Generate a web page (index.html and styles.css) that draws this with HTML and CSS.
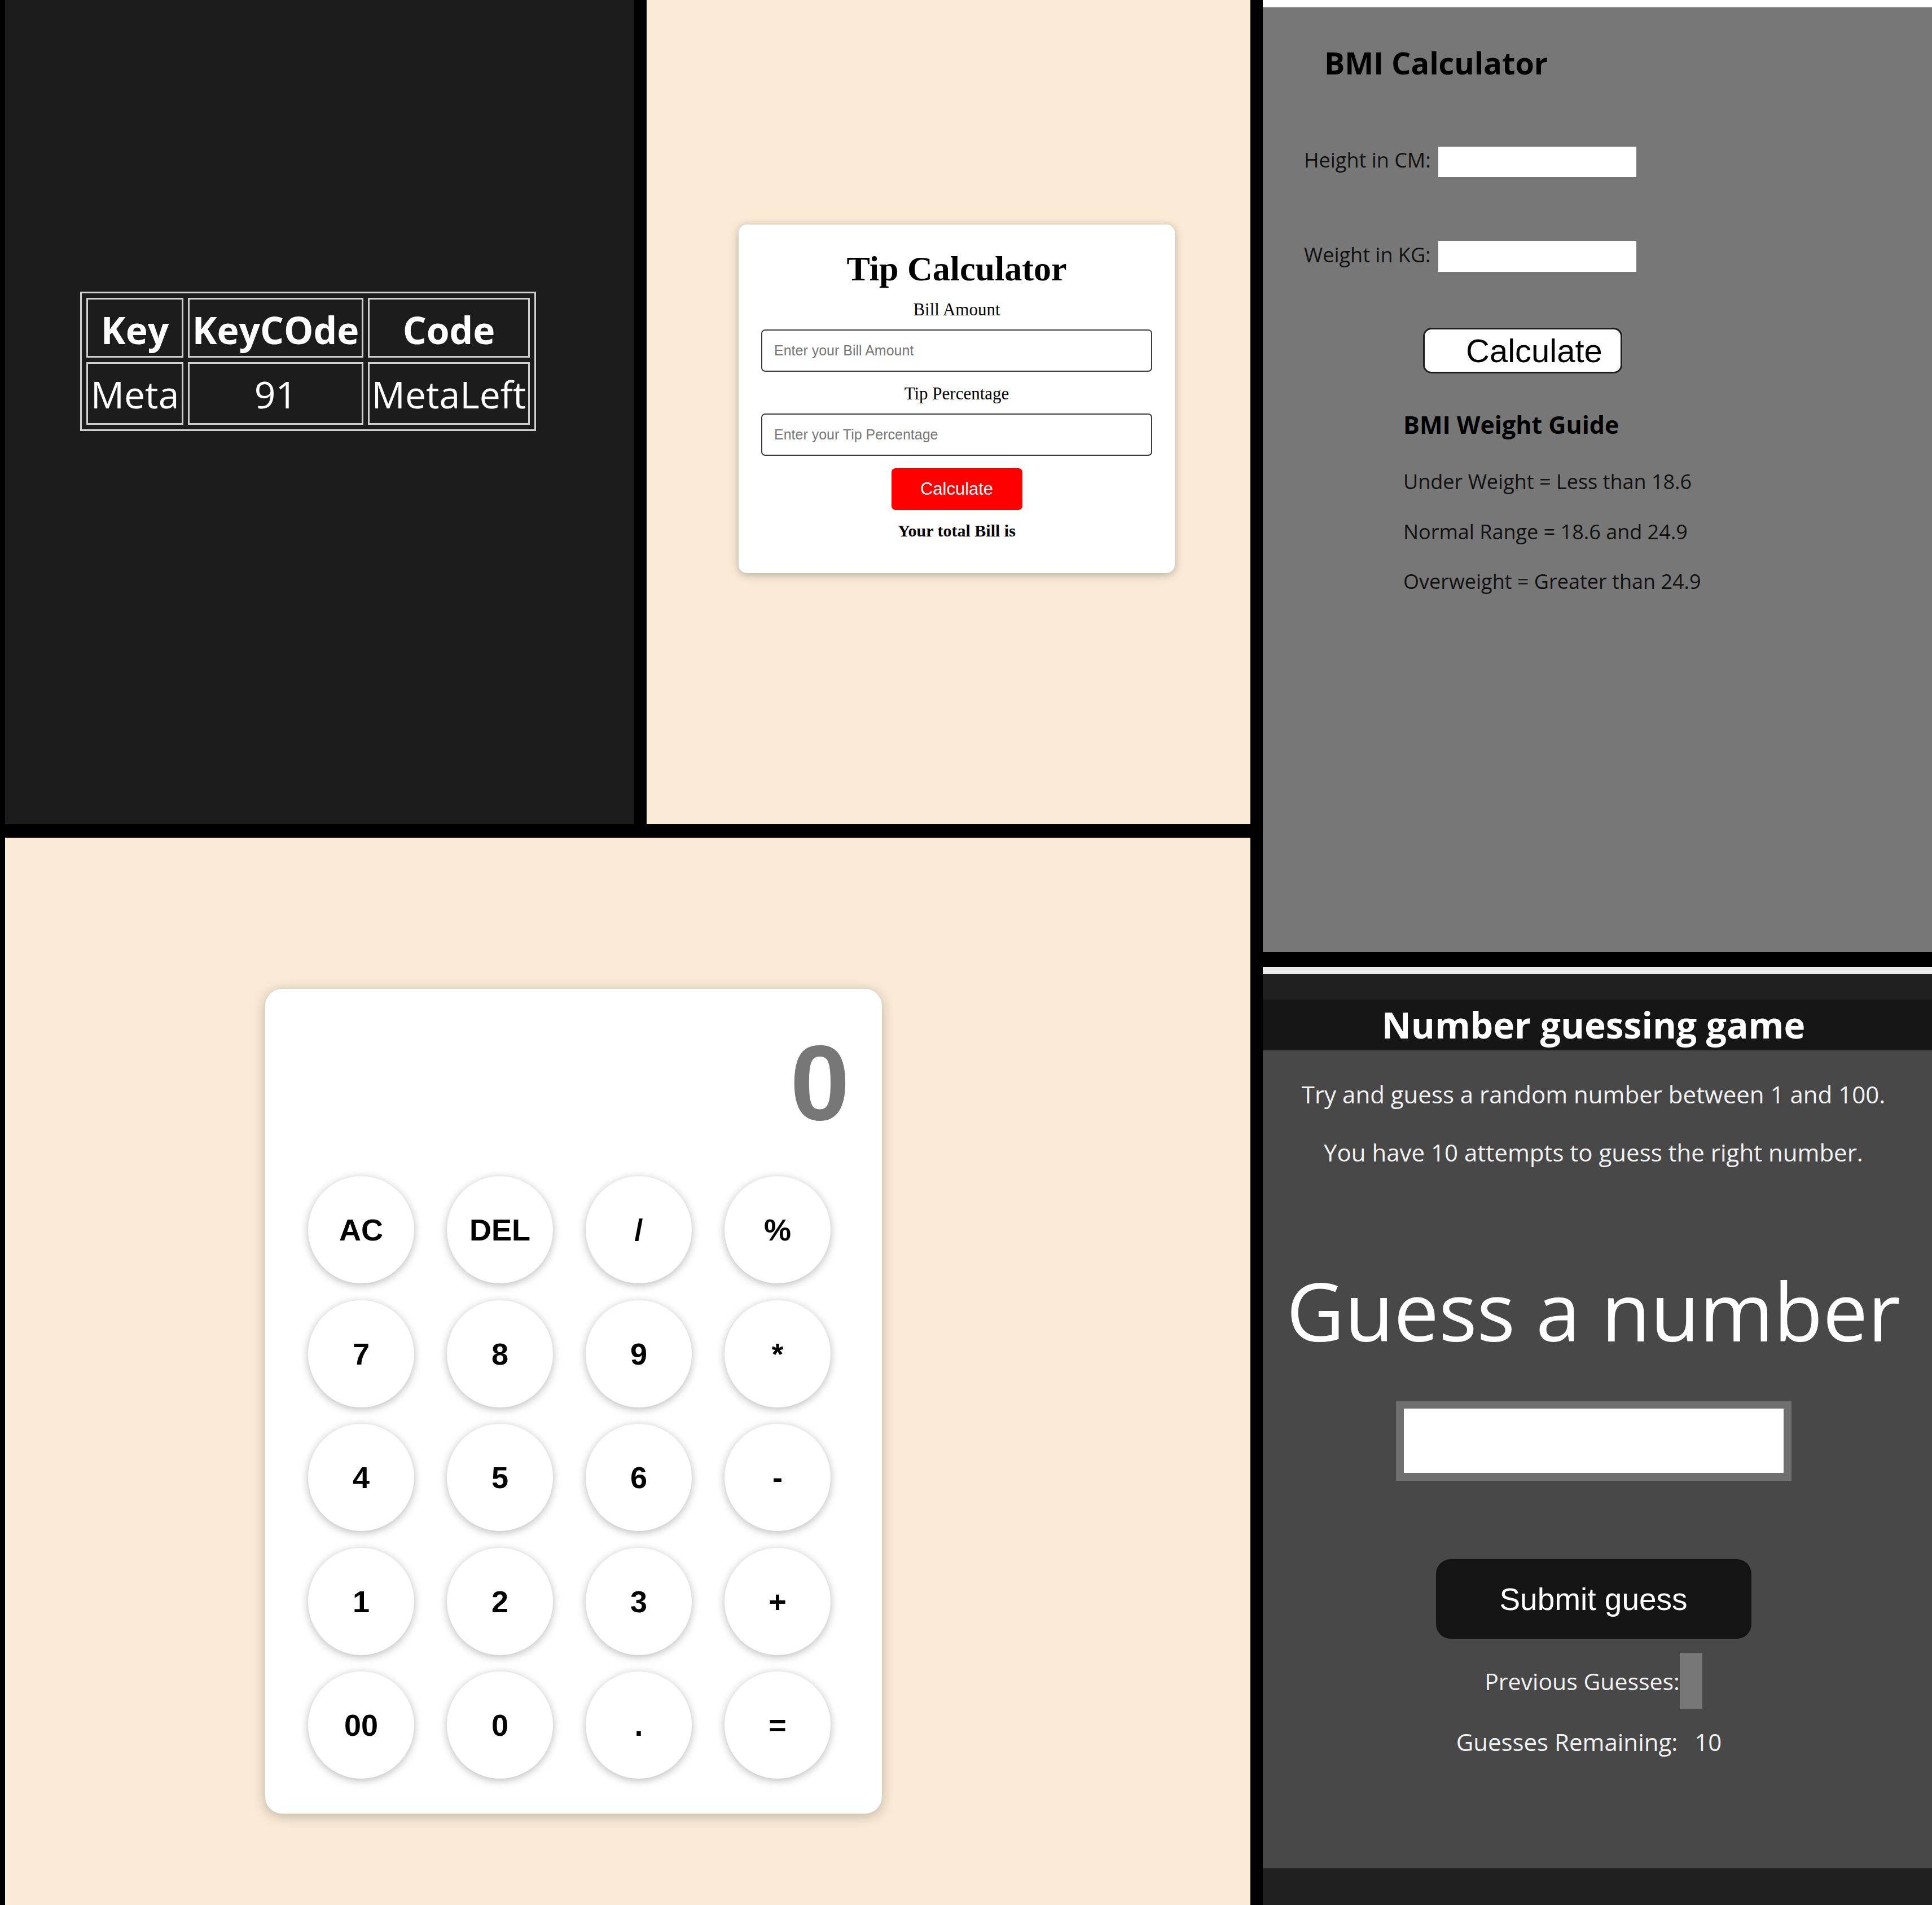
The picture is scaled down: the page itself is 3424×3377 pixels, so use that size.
FILE: index.html
```html
<!DOCTYPE html>
<html lang="en">
<head>
<meta charset="utf-8">
<title>Mini apps</title>
<link rel="stylesheet" href="styles.css">
</head>
<body>
<div class="page">
  <div class="left">
    <div class="top-row">
      <section class="keycode">
        <table class="keytable">
          <tr>
            <th class="c1">Key</th>
            <th class="c2">KeyCOde</th>
            <th class="c3">Code</th>
          </tr>
          <tr>
            <td class="c1">Meta</td>
            <td class="c2">91</td>
            <td class="c3">MetaLeft</td>
          </tr>
        </table>
      </section>
      <section class="tip">
        <div class="tip-card">
          <h1 class="tip-title">Tip Calculator</h1>
          <p class="tip-label">Bill Amount</p>
          <input class="tip-input" type="text" placeholder="Enter your Bill Amount">
          <p class="tip-label">Tip Percentage</p>
          <input class="tip-input" type="text" placeholder="Enter your Tip Percentage">
          <button class="tip-btn">Calculate</button>
          <p class="tip-total">Your total Bill is</p>
        </div>
      </section>
    </div>
    <section class="calc">
      <div class="calc-card">
        <div class="calc-display">0</div>
        <div class="calc-keys">
          <button class="key">AC</button>
          <button class="key">DEL</button>
          <button class="key">/</button>
          <button class="key">%</button>
          <button class="key">7</button>
          <button class="key">8</button>
          <button class="key">9</button>
          <button class="key">*</button>
          <button class="key">4</button>
          <button class="key">5</button>
          <button class="key">6</button>
          <button class="key">-</button>
          <button class="key">1</button>
          <button class="key">2</button>
          <button class="key">3</button>
          <button class="key">+</button>
          <button class="key">00</button>
          <button class="key">0</button>
          <button class="key">.</button>
          <button class="key">=</button>
        </div>
      </div>
    </section>
  </div>
  <div class="right">
    <section class="bmi">
      <h2 class="bmi-title">BMI Calculator</h2>
      <div class="bmi-row bmi-row-h">
        <label class="bmi-label">Height in CM:</label>
        <input class="bmi-input" type="text">
      </div>
      <div class="bmi-row bmi-row-w">
        <label class="bmi-label">Weight in KG:</label>
        <input class="bmi-input" type="text">
      </div>
      <button class="bmi-btn">Calculate</button>
      <h3 class="bmi-guide-title">BMI Weight Guide</h3>
      <p class="bmi-guide">Under Weight = Less than 18.6</p>
      <p class="bmi-guide">Normal Range = 18.6 and 24.9</p>
      <p class="bmi-guide">Overweight = Greater than 24.9</p>
    </section>
    <section class="guess">
      <div class="guess-gap"></div>
      <h1 class="guess-header">Number guessing game</h1>
      <div class="guess-main">
        <p class="guess-p guess-p1">Try and guess a random number between 1 and 100.</p>
        <p class="guess-p guess-p2">You have 10 attempts to guess the right number.</p>
        <h2 class="guess-big">Guess a number</h2>
        <input class="guess-input" type="text">
        <button class="guess-btn">Submit guess</button>
        <div class="guess-prev">
          <span>Previous Guesses:</span><span class="guess-prev-box"></span>
        </div>
        <div class="guess-remain">
          <span>Guesses Remaining:</span><span class="guess-count">10</span>
        </div>
      </div>
    </section>
  </div>
</div>
</body>
</html>
```

FILE: styles.css
```css
html, body {
  margin: 0;
  padding: 0;
  background: #000;
}

.page {
  display: flex;
  gap: 22px;
  width: 3424px;
  height: 3377px;
  padding-left: 9px;
  box-sizing: border-box;
  overflow: hidden;
}

.left {
  width: 2207px;
  display: flex;
  flex-direction: column;
  gap: 24px;
}

.top-row {
  display: flex;
  gap: 23px;
  height: 1461px;
  flex: none;
}

/* ---------- Key code panel ---------- */
.keycode {
  width: 1114px;
  background: #1c1c1c;
  padding: 517px 0 0 133px;
  box-sizing: border-box;
}

.keytable {
  border: 3px solid #cfcfcf;
  border-spacing: 8px;
  color: #fff;
  font-family: "Open Sans", "Liberation Sans", sans-serif;
  font-size: 66px;
}

.keytable th,
.keytable td {
  border: 3px solid #cfcfcf;
  padding: 0;
  text-align: center;
  vertical-align: middle;
  line-height: 90px;
}

.keytable th {
  font-weight: 700;
  height: 94px;
  padding-top: 6px;
}

.keytable td {
  font-weight: 400;
  height: 105px;
}

.keytable .c1 { width: 166px; }
.keytable .c2 { width: 305px; }
.keytable .c3 { width: 281px; }

/* ---------- Tip calculator ---------- */
.tip {
  width: 1070px;
  background: #faebd7;
  padding: 398px 0 0 163px;
  box-sizing: border-box;
}

.tip-card {
  width: 773px;
  height: 618px;
  box-sizing: border-box;
  background: #fff;
  border-radius: 15px;
  box-shadow: 0 3px 16px rgba(0, 0, 0, 0.28);
  padding: 42px 40px 0;
  display: flex;
  flex-direction: column;
  align-items: center;
  font-family: "Liberation Serif", "Times New Roman", serif;
  color: #000;
}

.tip-title {
  margin: 0;
  font-size: 62px;
  line-height: 72px;
  font-weight: 700;
}

.tip-label {
  margin: 19px 0 17px;
  font-size: 31px;
  line-height: 36px;
}

.tip-label + .tip-input + .tip-label {
  margin-top: 21px;
}

.tip-input {
  width: 693px;
  height: 75px;
  box-sizing: border-box;
  border: 2px solid #3a3a3a;
  border-radius: 7px;
  padding: 0 0 0 21px;
  font-family: "Liberation Sans", Arial, sans-serif;
  font-size: 25px;
  background: #fff;
  outline: none;
}

.tip-input::placeholder {
  color: #767676;
}

.tip-btn {
  margin-top: 22px;
  width: 232px;
  height: 74px;
  border: none;
  border-radius: 7px;
  background: #ff0000;
  color: #fff;
  font-family: "Liberation Sans", Arial, sans-serif;
  font-size: 31px;
  padding: 0;
}

.tip-total {
  margin: 19px 0 0;
  font-size: 30px;
  line-height: 35px;
  font-weight: 700;
}

/* ---------- Calculator ---------- */
.calc {
  flex: 1;
  background: #faebd7;
  padding: 268px 0 0 461px;
  box-sizing: border-box;
}

.calc-card {
  width: 1093px;
  height: 1462px;
  box-sizing: border-box;
  background: #fff;
  border-radius: 30px;
  box-shadow: 0 4px 22px rgba(0, 0, 0, 0.25);
  padding: 66px 57px 0 76px;
}

.calc-display {
  height: 200px;
  line-height: 200px;
  text-align: right;
  font-family: "Liberation Sans", Arial, sans-serif;
  font-weight: 700;
  font-size: 190px;
  color: #777;
}

.calc-keys {
  margin-top: 66px;
  display: grid;
  grid-template-columns: repeat(4, 188px);
  grid-auto-rows: 190px;
  column-gap: 58px;
  row-gap: 29.5px;
}

.key {
  width: 188px;
  height: 190px;
  border: none;
  border-radius: 50%;
  background: #fff;
  box-shadow: 0 3px 15px rgba(0, 0, 0, 0.28);
  font-family: "Liberation Sans", Arial, sans-serif;
  font-weight: 700;
  font-size: 54px;
  color: #000;
  padding: 0;
  display: flex;
  align-items: center;
  justify-content: center;
}

/* ---------- Right column ---------- */
.right {
  width: 1186px;
  display: flex;
  flex-direction: column;
  gap: 26px;
}

/* ---------- BMI ---------- */
.bmi {
  height: 1688px;
  flex: none;
  box-sizing: border-box;
  background: #777;
  border-top: 13px solid #fff;
  padding-left: 73px;
  font-family: "Open Sans", "Liberation Sans", sans-serif;
  color: #000;
  display: flex;
  flex-direction: column;
  align-items: flex-start;
}

.bmi-title {
  margin: 61px 0 0 36px;
  font-size: 54px;
  line-height: 75px;
  font-weight: 700;
}

.bmi-row {
  display: flex;
  align-items: center;
  gap: 13px;
  height: 54px;
}

.bmi-row-h {
  margin-top: 111px;
}

.bmi-row-w {
  margin-top: 113px;
  height: 55px;
}

.bmi-label {
  font-size: 36px;
  line-height: 54px;
  color: #111;
  position: relative;
  top: -3px;
}

.bmi-input {
  width: 351px;
  height: 100%;
  border: none;
  background: #fff;
  padding: 0;
  outline: none;
}

.bmi-btn {
  margin: 99px 0 0 211px;
  width: 353px;
  height: 81px;
  box-sizing: border-box;
  border: 3px solid #1e1e1e;
  border-radius: 15px;
  background: #fff;
  color: #000;
  font-family: "Liberation Sans", Arial, sans-serif;
  font-size: 58px;
  text-align: left;
  padding: 0 0 0 73px;
  line-height: 1;
}

.bmi-guide-title {
  margin: 62px 0 0 176px;
  font-size: 43px;
  line-height: 58px;
  font-weight: 700;
}

.bmi-guide {
  margin: 0 0 0 176px;
  font-size: 36px;
  line-height: 88.5px;
  color: #111;
}

.bmi-guide-title + .bmi-guide {
  margin-top: 28px;
}

/* ---------- Guessing game ---------- */
.guess {
  flex: 1;
  display: flex;
  flex-direction: column;
  background: #202020;
  border-top: 13px solid #ebebeb;
  font-family: "Open Sans", "Liberation Sans", sans-serif;
  color: #fff;
}

.guess-gap {
  height: 45px;
  flex: none;
}

.guess-header {
  margin: 0;
  height: 90px;
  line-height: 90px;
  background: #161616;
  text-align: center;
  font-size: 64px;
  font-weight: 700;
  padding-right: 14px;
}

.guess-main {
  height: 1450px;
  flex: none;
  background: #484848;
  display: flex;
  flex-direction: column;
  align-items: center;
  padding-right: 14px;
  box-sizing: border-box;
}

.guess-p {
  margin: 0;
  font-size: 42px;
  line-height: 57px;
  color: #f2f2f2;
}

.guess-p1 {
  margin-top: 49px;
}

.guess-p2 {
  margin-top: 46px;
}

.guess-big {
  margin: 167px 0 0;
  font-size: 142px;
  line-height: 170px;
  font-weight: 400;
  white-space: nowrap;
}

.guess-input {
  margin-top: 75px;
  width: 701px;
  height: 142px;
  box-sizing: border-box;
  border: 14px solid #6f6f6f;
  background: #fff;
  padding: 0;
  outline: none;
}

.guess-btn {
  margin-top: 139px;
  width: 559px;
  height: 141px;
  border: none;
  border-radius: 26px;
  background: #141414;
  color: #fff;
  font-family: "Liberation Sans", Arial, sans-serif;
  font-size: 55px;
  padding: 0;
}

.guess-prev {
  margin-top: 25px;
  height: 100px;
  display: flex;
  align-items: center;
  font-size: 41px;
  color: #f2f2f2;
}

.guess-prev-box {
  width: 40px;
  height: 100px;
  background: #777;
}

.guess-remain {
  margin: 30px 16px 0 0;
  font-size: 42px;
  line-height: 56px;
  color: #f2f2f2;
  display: flex;
  gap: 30px;
}
```
